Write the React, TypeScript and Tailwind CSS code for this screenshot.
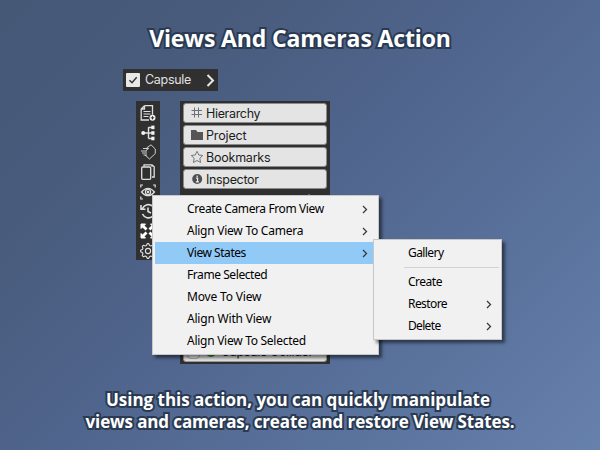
import React from "react";

const captionFont = "font-['Open_Sans','Noto_Sans',sans-serif] font-bold text-white [paint-order:stroke_fill] [-webkit-text-stroke:4px_#2a3a52]";

function Chevron() {
  return (
    <svg width="6" height="9" viewBox="0 0 6 9" fill="none" stroke="#3a3a3a" strokeWidth="1.3">
      <path d="M1 1l3.500 3.500L1 8" />
    </svg>
  );
}

function MenuItem({ label, width, arrow, active, sub }: { label: string; width: number; arrow?: boolean; active?: boolean; sub?: boolean }) {
  return (
    <div className={`flex h-[22px] items-center justify-between pl-8 ${sub ? "pr-[7px]" : "pr-2"} ${active ? "bg-[#91c9f7]" : ""}`}>
      <FitText text={label} width={width} />
      {arrow && <Chevron />}
    </div>
  );
}

function FitText({ text, width }: { text: string; width: number }) {
  const ref = React.useRef<HTMLSpanElement>(null);
  const [spacing, setSpacing] = React.useState(0);
  React.useLayoutEffect(() => {
    if (ref.current) setSpacing((width - ref.current.offsetWidth) / text.length);
  }, [text, width]);
  return (
    <span ref={ref} className="inline-block whitespace-pre" style={{ letterSpacing: spacing }}>
      {text}
    </span>
  );
}

/* Outline of an eight-toothed wheel around (8, 8). */
const gearOutline =
  Array.from({ length: 32 }, (_, i) => {
    const radius = i % 4 < 2 ? 7.4 : 5.7;
    const angle = ((i - 0.5) / 32) * Math.PI * 2;
    return `${i ? "L" : "M"}${(8 + radius * Math.cos(angle)).toFixed(2)} ${(8 + radius * Math.sin(angle)).toFixed(2)}`;
  }).join("") + "Z";

const tools = [
  <g key="doc">
    <path d="M4.500.7h8v9M4.500.7L1.200 4v11H9M4.500.7V4H1.200" strokeWidth="1.3" />
    <path d="M3.500 6.500h7M3.500 9h7M3.500 11.500h5" strokeWidth="1.2" />
    <circle cx="12.500" cy="12.800" r="3" fill="#f2f2f2" stroke="none" />
    <path d="M10.900 12.800h3.200M12.500 11.200v3.200" stroke="#303030" strokeWidth="1" />
  </g>,
  <g key="tree">
    <path d="M3 8h10M8.500 2.300v11.200M8.500 2.500h4M8.500 13.500h4" strokeWidth="1.400" />
    <g fill="#f2f2f2" stroke="none"><circle cx="3.200" cy="8" r="2" /><rect x="11.300" y=".6" width="3.200" height="3.600" /><rect x="11.300" y="6.200" width="3.200" height="3.600" /><rect x="11.300" y="11.700" width="3.200" height="3.600" /></g>
  </g>,
  <g key="tag" strokeWidth="1" stroke="#d0d0d0">
    <path d="M6.500 4L11 .8l4.300 4.200v4.500L9.500 15 5 11M3 4.500h5M1 7h6M2 9h5M3.500 11h3.500M9 4L6 6.500" />
  </g>,
  <g key="copy" strokeWidth="1.300">
    <rect x="1.700" y="3" width="9" height="12.300" rx="1" />
    <path d="M4 2.500V.8h8l2.200 2V13H12M12 .8v2" />
  </g>,
  <g key="view" strokeWidth="1.200">
    <path d="M.8 3.500V1H3M13 1h2.200v2.500M.8 12.500V15H3M13 15h2.200v-2.500M1.500 8q6.500-7.500 13 0q-6.500 7.500-13 0z" />
    <circle cx="8" cy="8" r="2.600" /><circle cx="8" cy="8" r=".7" />
  </g>,
  <g key="history" strokeWidth="1.600">
    <path d="M2.500 5.500a6.600 6.600 0 1 1 0 5.500M1 2v4.200h4.500M8 4.500v4l3 1.500" />
  </g>,
  <g key="expand" fill="#fff" stroke="#fff" strokeWidth="1">
    <path d="M1 1h4.500L1 5.500zM15 1h-4.500L15 5.500zM1 15h4.500L1 10.500zM15 15h-4.500l4.500-4.500z" />
    <path d="M3 3l3.500 3.500M13 3L9.500 6.500M3 13l3.500-3.500M13 13L9.500 9.500" strokeWidth="2.800" />
  </g>,
  <g key="gear" strokeWidth="1.100">
    <path d={gearOutline} strokeLinejoin="round" />
    <circle cx="8" cy="8" r="2.600" />
  </g>,
];

const windows = [
  { label: "Hierarchy", width: 54, icon: <path d="M3.500.5v10M7.500.5v10M.5 3.500h10.500M.5 7.500h10.500" stroke="#707070" strokeWidth="1" /> },
  { label: "Project", width: 41, icon: <path d="M0 1h5l1.500 2H12v8H0z" fill="#555" /> },
  { label: "Bookmarks", width: 64, icon: <path d="M6 .3l1.800 3.700 4 .5-3 2.800.8 4.200L6 9.500l-3.600 2 .8-4.200-3-2.800 4-.5z" fill="none" stroke="#777" strokeWidth="1" /> },
  { label: "Inspector", width: 53, icon: <g><circle cx="6.200" cy="6" r="5" fill="#505050" /><path d="M5 5.200h1.600v3.600M4.900 8.900h3" stroke="#eee" strokeWidth="1.200" fill="none" /><circle cx="6.200" cy="3.200" r=".8" fill="#eee" /></g> },
];

export default function App() {
  return (
    <main className="relative flex h-[450px] w-[600px] flex-col overflow-hidden bg-[linear-gradient(135deg,#455876_0%,#485b7c_22%,#50658d_48%,#5a739d_75%,#6781ad_100%)]">
      <h1 className={`flex h-[69px] items-center justify-center pt-[8px] text-[23px] ${captionFont}`}>
        <FitText text="Views And Cameras Action" width={302} />
      </h1>

      <div className="ml-[123px] flex h-[22px] w-[95px] items-center bg-[#303030] pl-[3px] font-['Inter',sans-serif] text-[12.5px] text-[#e0e0e0]">
        <svg width="14" height="14" viewBox="0 0 14 14"><rect width="14" height="14" rx="1" fill="#e8e8e8" /><path d="M3.500 7.200l2.500 2.500 4.700-5.500" fill="none" stroke="#333" strokeWidth="1.500" /></svg>
        <span className="ml-[5px] pt-px"><FitText text="Capsule" width={46} /></span>
        <svg className="ml-[15px]" width="9" height="13" viewBox="0 0 9 13" fill="none" stroke="#e8e8e8" strokeWidth="2"><path d="M1.500 1l5.500 5.500L1.500 12" /></svg>
      </div>

      <div className="mt-[10px] ml-[136px] flex items-start gap-5">
        <div className="flex h-[159px] w-6 flex-col items-center gap-[3.700px] bg-[#303030] pt-1">
          {tools.map((icon) => (
            <svg key={icon.key} className="shrink-0" width="16" height="16" viewBox="0 0 16 16" fill="none" stroke="#e0e0e0">{icon}</svg>
          ))}
        </div>
        <div className="flex h-[263px] w-[150px] flex-col justify-between bg-[#303030] px-[3px] pt-[2px] pb-[2px] font-['Inter',sans-serif] text-[12.5px] text-[#1c1c1c]">
          <div className="flex flex-col gap-[2px]">
            {windows.map((w) => (
              <div key={w.label} className="flex h-5 items-center rounded-[3px] border border-[#8b8b8b] bg-[#e4e4e4] pl-[7px]">
                <svg width="12" height="12" viewBox="0 0 12 12" fill="none">{w.icon}</svg>
                <span className="ml-[3px] pt-[2px]"><FitText text={w.label} width={w.width} /></span>
              </div>
            ))}
            <svg className="ml-[123px]" width="6" height="5" viewBox="0 0 6 5"><path d="M3 3L1.500 5h3z" fill="#bbb" /></svg>
          </div>
          <div className="flex h-5 items-center rounded-[3px] border border-[#999] bg-[#e4e4e4] pl-[3px]">
            <span className="h-[13px] w-[13px] rounded-sm border border-[#aaa] bg-[#eee]" />
            <span className="ml-[6px] h-[10px] w-[10px] rounded-full bg-[#3c8c42]" />
            <span className="ml-[5px]"><FitText text="Capsule Collider" width={92} /></span>
          </div>
        </div>
      </div>

      <p className={`mt-[25px] flex flex-col items-center text-[17px] leading-[22px] ${captionFont}`}>
        <span className="-ml-1"><FitText text="Using this action, you can quickly manipulate" width={384} /></span>
        <FitText text="views and cameras, create and restore View States." width={429} />
      </p>

      <div className="absolute top-[195px] left-[152px] h-[160px] w-[227px] border border-[#c8c8c8] bg-[#f1f1f1] p-[2px] font-['Noto_Sans',sans-serif] text-[12px] text-black shadow-[3px_3px_3px_rgba(0,0,0,0.5)]">
        <MenuItem label="Create Camera From View" width={137} arrow />
        <MenuItem label="Align View To Camera" width={116} arrow />
        <MenuItem label="View States" width={59} arrow active />
        <MenuItem label="Frame Selected" width={80} />
        <MenuItem label="Move To View" width={74} />
        <MenuItem label="Align With View" width={84} />
        <MenuItem label="Align View To Selected" width={119} />
      </div>

      <div className="absolute top-[239px] left-[373px] h-[101px] w-[129px] border border-[#c8c8c8] bg-[#f1f1f1] p-[2px] font-['Noto_Sans',sans-serif] text-[12px] text-black shadow-[3px_3px_3px_rgba(0,0,0,0.5)]">
        <MenuItem label="Gallery" width={36} sub />
        <div className="mt-[3px] mb-[3px] ml-[28px] h-px bg-[#d2d2d2]" />
        <MenuItem label="Create" width={34} sub />
        <MenuItem label="Restore" width={39} arrow sub />
        <MenuItem label="Delete" width={33} arrow sub />
      </div>
    </main>
  );
}
